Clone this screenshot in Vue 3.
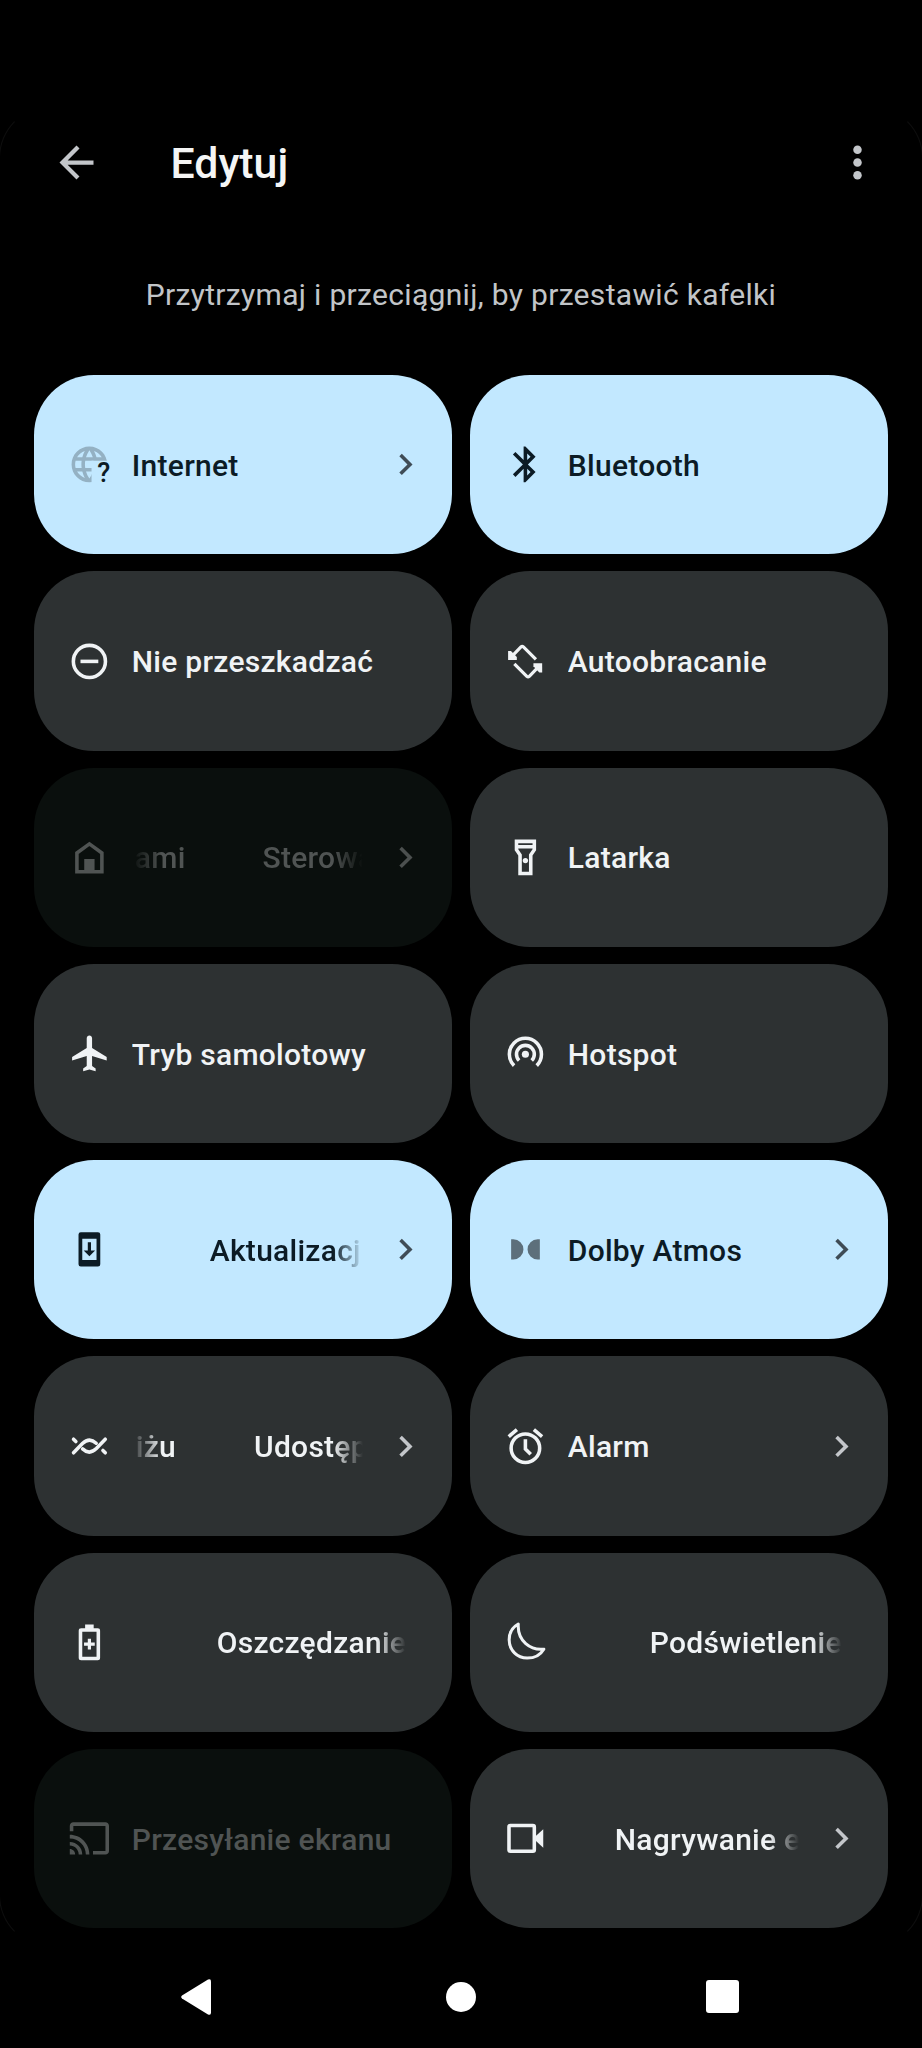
<script setup>
import { ref } from "vue";

// parts: visible pieces of the label, offset = space in front of each piece
const tiles = ref([
  { icon: "internet", state: "on", arrow: true, parts: [{ text: "Internet", offset: 0 }] },
  { icon: "bluetooth", state: "on", parts: [{ text: "Bluetooth", offset: 0 }] },
  { icon: "dnd", state: "off", parts: [{ text: "Nie przeszkadzać", offset: 0 }] },
  { icon: "rotate", state: "off", parts: [{ text: "Autoobracanie", offset: 0 }] },
  {
    icon: "home",
    state: "disabled",
    arrow: true,
    fade: "both",
    parts: [
      { text: "ami", offset: 3 },
      { text: "Sterowa", offset: 77 },
    ],
  },
  { icon: "flashlight", state: "off", parts: [{ text: "Latarka", offset: 0 }] },
  { icon: "plane", state: "off", parts: [{ text: "Tryb samolotowy", offset: 0 }] },
  { icon: "hotspot", state: "off", parts: [{ text: "Hotspot", offset: 0 }] },
  { icon: "update", state: "on", arrow: true, fade: "end", parts: [{ text: "Aktualizacj", offset: 78 }] },
  { icon: "dolby", state: "on", arrow: true, parts: [{ text: "Dolby Atmos", offset: 0 }] },
  {
    icon: "nearby",
    state: "off",
    arrow: true,
    fade: "both",
    parts: [
      { text: "iżu", offset: 4 },
      { text: "Udostęp", offset: 78 },
    ],
  },
  { icon: "alarm", state: "off", arrow: true, parts: [{ text: "Alarm", offset: 0 }] },
  { icon: "battery", state: "off", fade: "end", parts: [{ text: "Oszczędzanie", offset: 85 }] },
  { icon: "moon", state: "off", fade: "end", parts: [{ text: "Podświetlenie", offset: 82 }] },
  { icon: "cast", state: "disabled", parts: [{ text: "Przesyłanie ekranu", offset: 0 }] },
  { icon: "record", state: "off", arrow: true, fade: "end", parts: [{ text: "Nagrywanie e", offset: 47 }] },
]);
</script>

<template>
  <main>
    <section class="panel">
      <header>
        <button class="bar-button" aria-label="Wstecz">
          <svg viewBox="0 0 24 24">
            <path d="M20 11H7.83l5.59-5.59L12 4l-8 8 8 8 1.41-1.41L7.83 13H20v-2z" />
          </svg>
        </button>
        <h1>Edytuj</h1>
        <button class="bar-button" aria-label="Więcej opcji">
          <svg viewBox="0 0 24 24">
            <circle cx="12" cy="6" r="2" />
            <circle cx="12" cy="12" r="2" />
            <circle cx="12" cy="18" r="2" />
          </svg>
        </button>
      </header>

      <p class="hint">Przytrzymaj i przeciągnij, by przestawić kafelki</p>

      <div class="grid">
        <div v-for="tile in tiles" :key="tile.icon" class="tile" :class="tile.state">
          <svg class="icon" viewBox="0 0 24 24">
            <template v-if="tile.icon === 'internet'">
              <clipPath id="globe-cut">
                <path d="M0 0h24v10H13.2v14H0z" />
              </clipPath>
              <path
                class="muted"
                clip-path="url(#globe-cut)"
                d="M11.99 2C6.47 2 2 6.48 2 12s4.47 10 9.99 10C17.52 22 22 17.52 22 12S17.52 2 11.99 2zm6.93 6h-2.95c-.32-1.25-.78-2.45-1.38-3.56 1.84.63 3.37 1.91 4.33 3.56zM12 4.04c.83 1.2 1.48 2.53 1.91 3.96h-3.82c.43-1.43 1.08-2.76 1.91-3.96zM4.26 14C4.1 13.36 4 12.69 4 12s.1-1.36.26-2h3.38c-.08.66-.14 1.32-.14 2 0 .68.06 1.34.14 2H4.26zm.82 2h2.95c.32 1.25.78 2.45 1.38 3.56-1.84-.63-3.37-1.9-4.33-3.56zm2.95-8H5.08c.96-1.66 2.49-2.93 4.33-3.56C8.81 5.55 8.35 6.75 8.03 8zM12 19.96c-.83-1.2-1.48-2.53-1.91-3.96h3.82c-.43 1.43-1.08 2.76-1.91 3.96zM14.34 14H9.66c-.09-.66-.16-1.32-.16-2 0-.68.07-1.35.16-2h4.68z"
              />
              <text x="20.1" y="22" text-anchor="middle">?</text>
            </template>
            <path
              v-else-if="tile.icon === 'bluetooth'"
              d="M17.71 7.71L12 2h-1v7.59L6.41 5 5 6.41 10.59 12 5 17.59 6.41 19 11 14.41V22h1l5.71-5.71-4.3-4.29 4.3-4.29zM13 5.83l1.88 1.88L13 9.59V5.83zm1.88 10.46L13 18.17v-3.76l1.88 1.88z"
            />
            <g v-else-if="tile.icon === 'dnd'" class="line">
              <circle cx="12" cy="12" r="9" />
              <path d="M7 12h10" />
            </g>
            <template v-else-if="tile.icon === 'rotate'">
              <g v-for="angle in [0, 180]" :key="angle" :transform="`rotate(${angle} 11.85 12.15)`">
                <path d="M2.3 6.1h1.6l3.3 3.5v1.6H2.3z" />
                <path class="line turn" d="M4 9.6l5.5-5.7q.7-.6 1.4 0l7 7" />
              </g>
            </template>
            <template v-else-if="tile.icon === 'home'">
              <path class="line" d="M5 9.5l7-5.1 7 5.1V20H5z" />
              <path d="M9.1 12.9h5.8V20H9.1z" />
            </template>
            <template v-else-if="tile.icon === 'flashlight'">
              <path
                d="M18 2H6v6l2 3v11h8V11l2-3V2zm-2 2v1H8V4h8zm-2 6.4V20h-4v-9.61l-2-3V7h8v.39l-2 3.01z"
              />
              <circle cx="12" cy="13.8" r="1.5" />
            </template>
            <path
              v-else-if="tile.icon === 'plane'"
              transform="translate(.5 0)"
              d="M21.2 16v-2L13 9V3.5c0-.83-.67-1.5-1.5-1.5S10 2.67 10 3.5V9l-8.2 5v2l8.2-2.5V19l-2 1.5V22l3.5-1 3.5 1v-1.5L13 19v-5.5l8.2 2.5z"
            />
            <template v-else-if="tile.icon === 'hotspot'">
              <circle cx="12" cy="12.5" r="2" />
              <path class="line" d="M8.46 16.04a5 5 0 1 1 7.08 0M5.64 18.86a9 9 0 1 1 12.72 0" />
            </template>
            <template v-else-if="tile.icon === 'update'">
              <path
                fill-rule="evenodd"
                d="M7.2 2.4h9.6q1.3 0 1.3 1.3v16.6q0 1.3-1.3 1.3H7.2q-1.3 0-1.3-1.3V3.7q0-1.3 1.3-1.3zM8 6v12h8V6z"
              />
              <path d="M11.1 8h1.8v4.6h2.3L12 15.9l-3.2-3.3h2.3z" />
            </template>
            <path
              v-else-if="tile.icon === 'dolby'"
              class="dim"
              d="M4 6.3h1.2a5.7 5.7 0 0 1 0 11.4H4zM20.1 6.3h-1.2a5.7 5.7 0 0 0 0 11.4h1.2z"
            />
            <template v-else-if="tile.icon === 'nearby'">
              <g
                v-for="angle in [0, 180]"
                :key="angle"
                class="line round"
                :transform="`rotate(${angle} 12 11.8)`"
              >
                <path d="M3.1 15.6l5-5.2Q12 6.6 15.8 10.2M3.1 8l1.3 1.3" />
              </g>
            </template>
            <template v-else-if="tile.icon === 'alarm'">
              <path
                d="M22 5.72l-4.6-3.86-1.29 1.53 4.6 3.86L22 5.72zM7.88 3.39L6.6 1.86 2 5.71l1.29 1.53 4.59-3.85z"
              />
              <circle class="line" cx="12" cy="13" r="8" />
              <path class="line" d="M12 8v5.4l3 3" />
            </template>
            <template v-else-if="tile.icon === 'battery'">
              <rect class="line" x="7" y="5" width="10" height="16" rx=".4" />
              <path d="M9.6 2h4.8v3H9.6zM11.1 10h1.8v2.1H15v1.8h-2.1V16h-1.8v-2.1H9v-1.8h2.1z" />
            </template>
            <path
              v-else-if="tile.icon === 'moon'"
              class="line thin"
              d="M8 1.7C4.6 3.6 2.9 7 2.9 10.5 2.9 16.4 7.4 20.8 13 20.8c4 0 7.5-1.9 9.3-5C15 16.6 7.4 11.5 8 1.7z"
            />
            <path
              v-else-if="tile.icon === 'cast'"
              d="M21 3H3c-1.1 0-2 .9-2 2v3h2V5h18v14h-7v2h7c1.1 0 2-.9 2-2V5c0-1.1-.9-2-2-2zM1 18v3h3c0-1.66-1.34-3-3-3zm0-4v2c2.76 0 5 2.24 5 5h2c0-3.87-3.13-7-7-7zm0-4v2c4.97 0 9 4.03 9 9h2c0-6.08-4.93-11-11-11z"
            />
            <template v-else-if="tile.icon === 'record'">
              <rect class="line" x="2.8" y="4.8" width="14.2" height="14.4" rx=".8" />
              <path d="M17.5 11L22 6.8v10.4L17.5 13z" />
            </template>
          </svg>

          <div class="label" :class="tile.fade && 'fade-' + tile.fade">
            <span v-for="part in tile.parts" :key="part.text" :style="{ marginLeft: part.offset + 'px' }">{{
              part.text
            }}</span>
          </div>

          <svg v-if="tile.arrow" class="chevron" viewBox="0 0 24 24">
            <path d="M10 6L8.59 7.41 13.17 12l-4.58 4.59L10 18l6-6z" />
          </svg>
        </div>
      </div>
    </section>

    <nav>
      <svg class="back" viewBox="0 0 30 36">
        <path d="M27 .6Q30-.8 30 2.5v31Q30 36.8 27 35.4L1 19.6Q-.6 18 1 16.4z" />
      </svg>
      <span class="circle"></span>
      <span class="square"></span>
    </nav>
  </main>
</template>

<style>
body {
  margin: 0;
  background-color: #000;
}
</style>

<style scoped>
main {
  width: 922px;
  height: 2048px;
  padding-top: 106px;
  box-sizing: border-box;
  display: flex;
  flex-direction: column;
  overflow: hidden;
  background-color: #000;
  font-family: Roboto, "Noto Sans", sans-serif;
}

.panel {
  height: 1841px;
  box-sizing: border-box;
  border: 1px solid transparent;
  border-left-color: #0e0e0e;
  border-right-color: #0e0e0e;
  border-radius: 52px;
  margin: 0 -1px;
}

header {
  display: flex;
  align-items: center;
  height: 110px;
  padding: 0 39px 0 51px;
}

h1 {
  flex: 1;
  margin: 0;
  padding: 2px 0 0 68.5px;
  font-size: 42.8px;
  font-weight: 500;
  color: #f4f5f5;
}

.bar-button {
  width: 51px;
  height: 51px;
  padding: 0;
  border: none;
  background: none;
}

.bar-button svg {
  display: block;
  fill: #c3c6ca;
}

.hint {
  margin: 58px 0 0;
  height: 40px;
  line-height: 40px;
  text-align: center;
  font-size: 30px;
  letter-spacing: 0.32px;
  color: #c2c5c8;
}

.grid {
  display: grid;
  grid-template-columns: 1fr 1fr;
  grid-auto-rows: 179.3px;
  gap: 17px 18px;
  padding: 60px 34px 0;
}

.tile {
  display: flex;
  align-items: center;
  min-width: 0;
  box-sizing: border-box;
  padding: 0 25.5px 0 34px;
  border-radius: 60px;
  color: #f0f3f5;
}

.on {
  background-color: #c2e8ff;
  color: #0c1b25;
}

.off {
  background-color: #2d3132;
}

.disabled {
  background-color: #0a0f0d;
  color: #505453;
}

.icon {
  flex: none;
  width: 42.8px;
  height: 42.8px;
  fill: currentColor;
  overflow: visible;
}

.icon text {
  font-size: 15px;
  font-weight: 500;
}

.line {
  fill: none;
  stroke: currentColor;
  stroke-width: 2;
}

.round {
  stroke-linecap: round;
}

.turn {
  stroke-width: 1.8;
}

.thin {
  stroke-width: 1.7;
  stroke-linejoin: round;
}

.muted {
  fill: #94b1c3;
}

.dim {
  fill: #5d6f7b;
}

.label {
  flex: 1;
  min-width: 0;
  display: flex;
  margin: 0 21px 0 21px;
  overflow: hidden;
  white-space: nowrap;
  font-size: 30px;
  font-weight: 500;
  letter-spacing: 0.27px;
  line-height: 40px;
  padding-top: 2px;
}

.label span {
  flex: none;
}

.fade-end {
  mask-image: linear-gradient(to left, transparent, #000 30px);
}

.fade-both {
  mask-image: linear-gradient(to right, transparent, #000 30px calc(100% - 30px), transparent);
}

.chevron {
  flex: none;
  width: 42.8px;
  height: 42.8px;
  fill: #c3c6ca;
}

.on .chevron {
  fill: #3f4c56;
}

.disabled .chevron {
  fill: #4c504f;
}

nav {
  flex: 1;
  display: flex;
  align-items: center;
  justify-content: space-between;
  padding: 0 183px 2px 181px;
}

.back {
  width: 30px;
  height: 36px;
  fill: #fff;
}

.circle {
  width: 30px;
  height: 30px;
  margin-left: 4px;
  border-radius: 50%;
  background-color: #fff;
}

.square {
  width: 33px;
  height: 33px;
  border-radius: 3px;
  background-color: #fff;
}
</style>
